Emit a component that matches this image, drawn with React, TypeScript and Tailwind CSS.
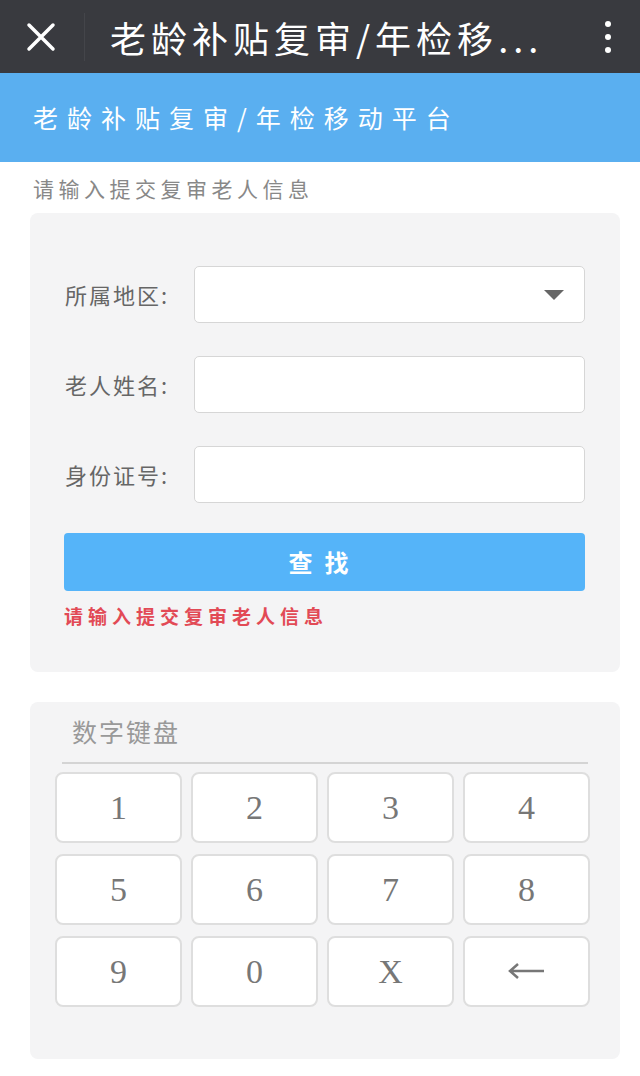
import React from "react";

const keys = ["1", "2", "3", "4", "5", "6", "7", "8", "9", "0", "X", "back"];

const cjk = { fontFamily: '"Noto Sans CJK SC", "Noto Sans", sans-serif' };

const Field = ({ label, select }: { label: string; select?: boolean }) => (
  <div className="flex items-center">
    <div className="w-[130px] pl-[1px] text-[22px] tracking-[2px] text-[#666]">{label}</div>
    <div className="relative h-[57px] w-[391px] rounded-[5px] border border-[#d6d6d6] bg-white">
      {select && (
        <div className="absolute right-[20px] top-[23px] h-0 w-0 border-x-[10px] border-t-[10px] border-x-transparent border-t-[#666]" />
      )}
    </div>
  </div>
);

export default function App() {
  return (
    <div className="min-h-[1076px] w-[640px] bg-white" style={cjk}>
      {/* wechat top bar */}
      <div className="flex h-[73px] items-center bg-[#393a3f] text-white">
        <div className="flex w-[84px] items-center justify-center pr-[2px]">
          <svg width="30" height="30" viewBox="0 0 30 30">
            <path d="M3 3 L27 27 M27 3 L3 27" stroke="white" strokeWidth="3.5" strokeLinecap="round" />
          </svg>
        </div>
        <div className="h-[48px] w-px bg-[#44454a]" />
        <div className="ml-[25px] flex-1 whitespace-nowrap text-[36px] leading-normal tracking-[5px]">
          老龄补贴复审/年检移<span className="tracking-[5px]">...</span>
        </div>
        <div className="flex w-[62px] flex-col items-center gap-[7px] pr-[2px]">
          <span className="h-[6px] w-[6px] rounded-full bg-white" />
          <span className="h-[6px] w-[6px] rounded-full bg-white" />
          <span className="h-[6px] w-[6px] rounded-full bg-white" />
        </div>
      </div>

      {/* page header */}
      <div className="flex h-[89px] items-center bg-[#5aaff0] pl-[33px] text-[25px] tracking-[9px] text-white">
        老龄补贴复审/年检移动平台
      </div>

      <div className="px-[33px] pt-[11px] text-[21px] tracking-[4.5px] text-[#888]">请输入提交复审老人信息</div>

      {/* form card */}
      <div className="ml-[30px] mr-[20px] mt-[8px] rounded-[8px] bg-[#f4f4f5] pb-[42px] pl-[34px] pt-[53px]">
        <div className="flex flex-col gap-[33px]">
          <Field label="所属地区:" select />
          <Field label="老人姓名:" />
          <Field label="身份证号:" />
        </div>
        <div className="mt-[30px] flex h-[58px] w-[521px] items-center justify-center rounded-[4px] bg-[#55b4f9] text-[24px] font-bold tracking-[12px] text-white">
          查找
        </div>
        <div className="mt-[11px] text-[19px] font-bold tracking-[5px] text-[#e24a55]">请输入提交复审老人信息</div>
      </div>

      {/* keypad */}
      <div className="ml-[30px] mr-[20px] mt-[30px] rounded-[8px] bg-[#f4f4f5] px-[25px] pb-[52px] pt-[11px]">
        <div className="pl-[17px] text-[25px] tracking-[2px] text-[#999]">数字键盘</div>
        <div className="ml-[7px] mr-[7px] mt-[11px] h-[2px] w-[526px] bg-[#d4d4d4]" />
        <div className="mt-[8px] grid grid-cols-[repeat(4,127px)] gap-x-[9px] gap-y-[11px]">
          {keys.map((k) => (
            <div
              key={k}
              className="flex h-[71px] items-center justify-center rounded-[8px] border-2 border-[#dedede] bg-white text-[34px] text-[#777]"
              style={{ fontFamily: '"Liberation Serif", "DejaVu Serif", serif' }}
            >
              {k === "back" ? (
                <svg width="38" height="16" viewBox="0 0 38 16">
                  <path d="M2 8 H36 M10 1 L2 8 L10 15" stroke="#777" strokeWidth="2.5" fill="none" />
                </svg>
              ) : (
                k
              )}
            </div>
          ))}
        </div>
      </div>
    </div>
  );
}
